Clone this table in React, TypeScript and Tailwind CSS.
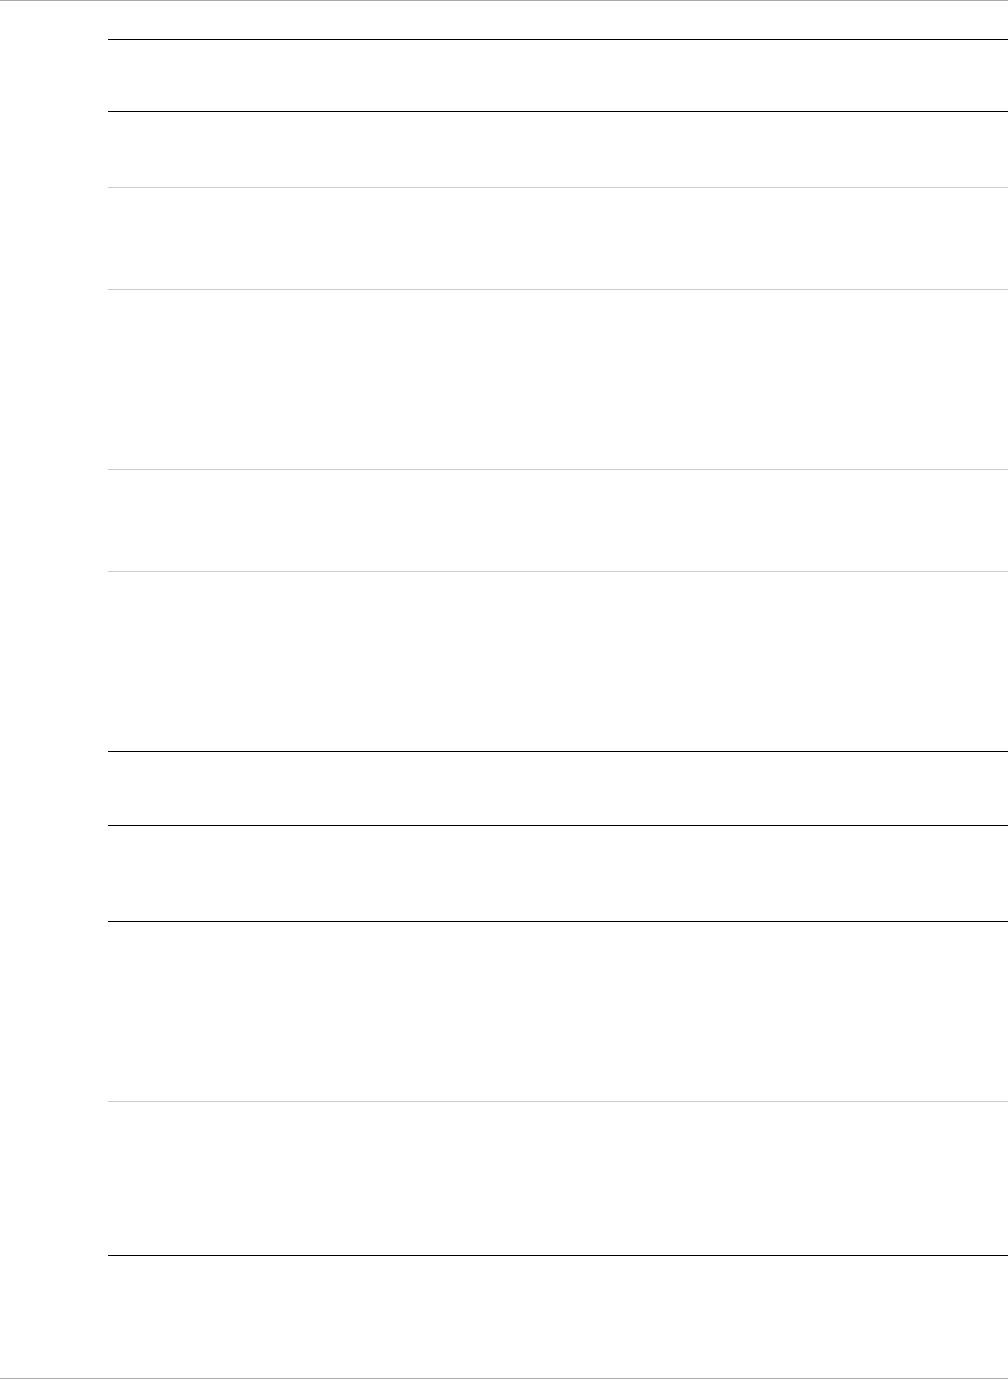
import React from "react";

type Row = { h: number; line: "black" | "gray" };

const rows: Row[] = [
  { h: 38, line: "black" },
  { h: 71, line: "black" },
  { h: 75, line: "gray" },
  { h: 101, line: "gray" },
  { h: 179, line: "gray" },
  { h: 101, line: "gray" },
  { h: 179, line: "black" },
  { h: 73, line: "black" },
  { h: 95, line: "black" },
  { h: 179, line: "gray" },
  { h: 153, line: "black" },
];

export default function App() {
  return (
    <div className="w-[1008px] h-[1380px] bg-white flex flex-col font-['Liberation_Sans',sans-serif]">
      <div className="h-px bg-[#aaaaaa] w-full" />
      <div className="flex-1 flex flex-col pl-[108px]">
        {rows.map((r, i) => (
          <div key={i} className="flex flex-col">
            <div style={{ height: r.h }} />
            <div className={r.line === "black" ? "h-px bg-black" : "h-px bg-[#cccccc]"} />
          </div>
        ))}
        <div className="flex-1" />
      </div>
      <div className="h-px bg-[#aaaaaa] w-full" />
      <div className="h-px" />
    </div>
  );
}
